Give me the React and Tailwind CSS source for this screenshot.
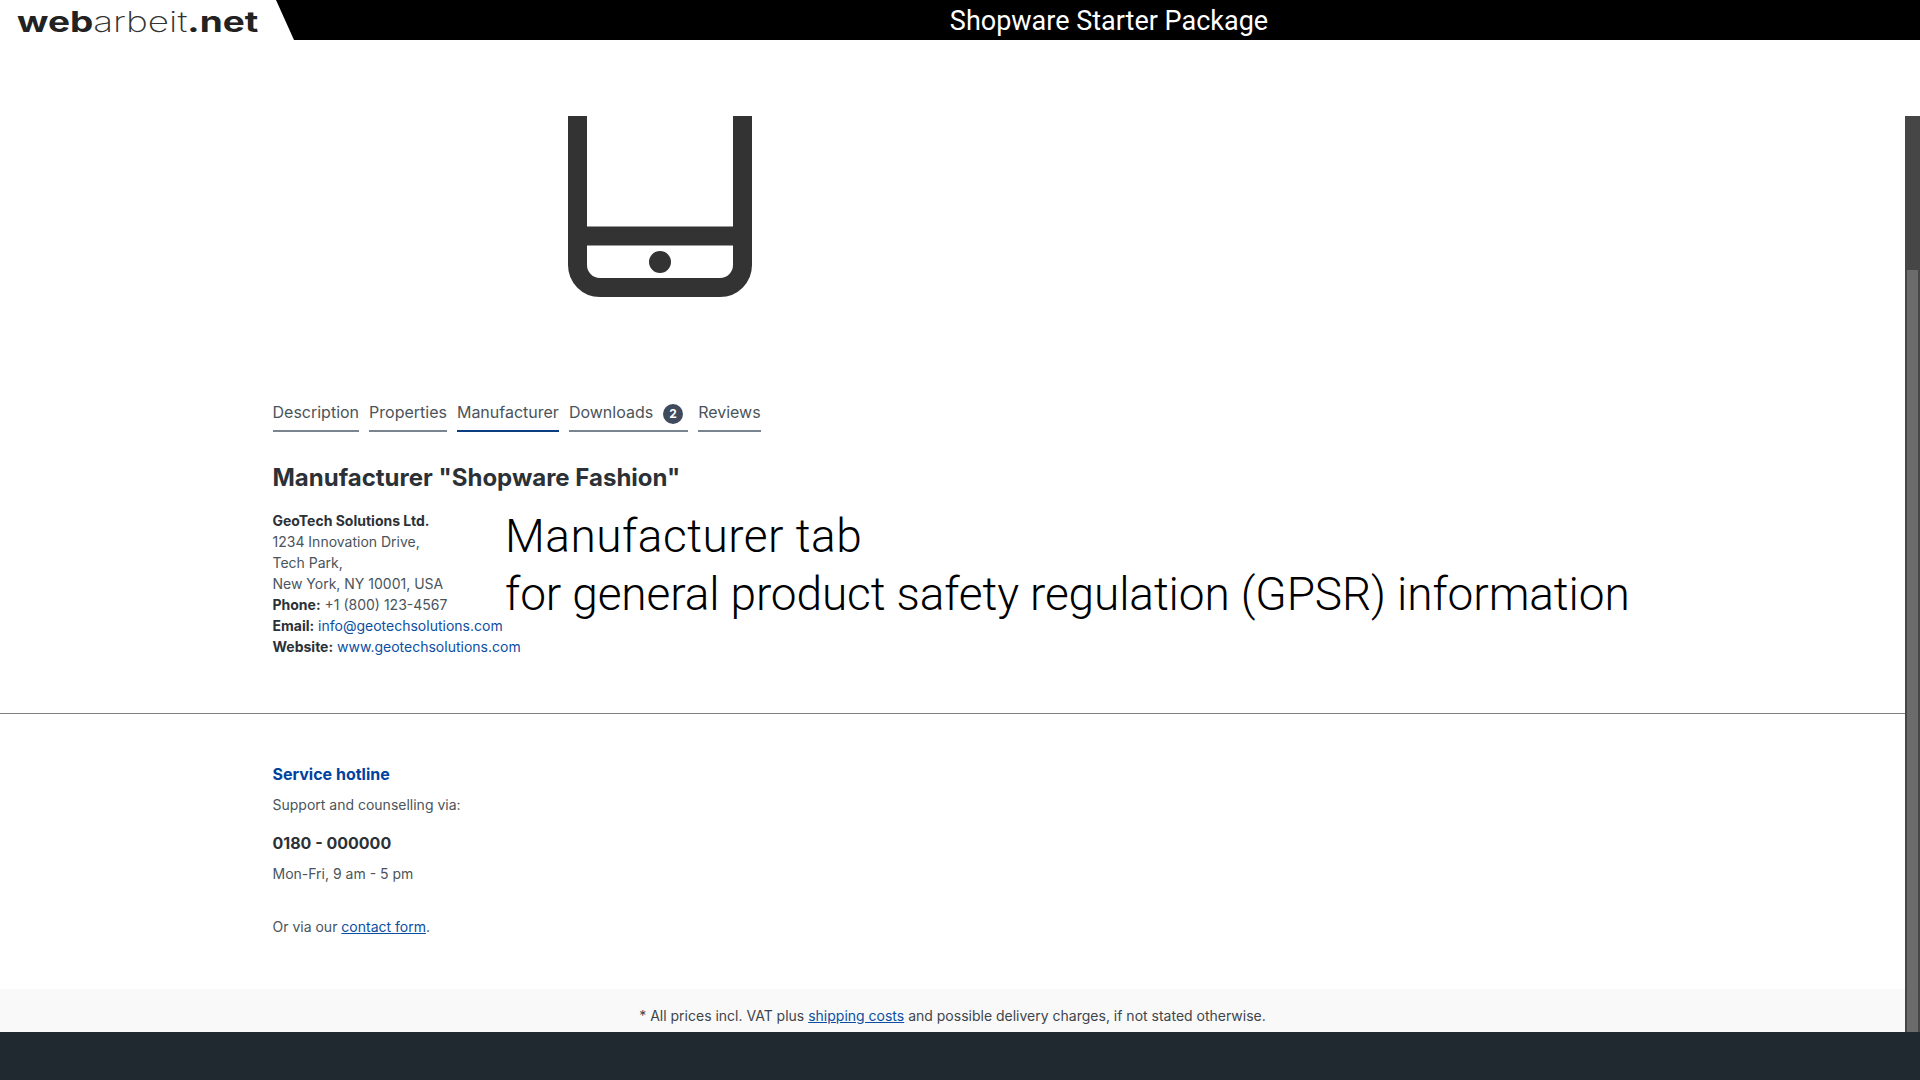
const tabs = [
  { label: 'Description' },
  { label: 'Properties' },
  { label: 'Manufacturer', active: true },
  { label: 'Downloads', badge: 2 },
  { label: 'Reviews' },
]

function PhoneIcon() {
  // bottom part of the phone glyph, the top is cut off by the image frame
  return (
    <svg width="184" height="182" viewBox="0 0 184 182" fill="none" className="block">
      <path d="M9.5 0V149A22.5 22.5 0 0 0 32 171.5H152A22.5 22.5 0 0 0 174.5 149V0" stroke="#333" strokeWidth="19" />
      <path d="M9.5 120H174.5" stroke="#333" strokeWidth="19" />
      <circle cx="92" cy="146" r="11" fill="#333" />
    </svg>
  )
}

export default function App() {
  return (
    <div className="relative h-[1080px] w-[1920px] overflow-hidden bg-white font-['Inter',sans-serif] text-[14px] leading-[21px] text-[#4a545b]">
      {/* Top bar */}
      <header className="relative flex h-10 items-center bg-black">
        <div className="flex h-10 w-[294px] shrink-0 items-center bg-white pl-[17px] pt-[3px] [clip-path:polygon(0_0,276px_0,294px_100%,0_100%)]">
          <span className="origin-left scale-x-[1.32] whitespace-nowrap text-[28px] leading-none text-[#222]">
            <span className="font-bold">web</span>
            <span className="font-extralight text-[#333]">arbeit</span>
            <span className="font-bold">.net</span>
          </span>
        </div>
        <div className="flex-1 pl-[4px] pt-[2px] text-center font-['Roboto',sans-serif] text-[27px] leading-10 text-white">
          Shopware Starter Package
        </div>
      </header>

      <div className="flex h-[992px]">
        <main className="flex w-[1905px] flex-col">
          <div className="pl-[272.5px] pt-[76px]">
            <div className="ml-[295.5px]">
              <PhoneIcon />
            </div>

            <nav className="mt-[102px] flex gap-[10px] text-[16px] leading-6">
              {tabs.map((tab) => (
                <div
                  key={tab.label}
                  className={`flex h-[32px] items-start border-b-2 ${tab.active ? 'border-[#0b3e7f]' : 'border-[#798490]'}`}
                >
                  <span>{tab.label}</span>
                  {tab.badge && (
                    <span className="ml-[10px] mr-[5px] mt-[4px] flex h-5 w-5 items-center justify-center rounded-full bg-[#3f4a5c] text-[12px] font-bold leading-none text-white">
                      {tab.badge}
                    </span>
                  )}
                </div>
              ))}
            </nav>

            <h2 className="mt-[31px] text-[24px] font-bold leading-[30px] text-[#2b3136]">
              Manufacturer "Shopware Fashion"
            </h2>

            <div className="mt-[17px]">
              <p className="font-bold text-[#2b3136]">GeoTech Solutions Ltd.</p>
              <p>1234 Innovation Drive,</p>
              <p>Tech Park,</p>
              <p>New York, NY 10001, USA</p>
              <p><b className="font-bold text-[#2b3136]">Phone:</b> +1 (800) 123-4567</p>
              <p><b className="font-bold text-[#2b3136]">Email:</b> <a className="text-[#0b4ea2]">info@geotechsolutions.com</a></p>
              <p><b className="font-bold text-[#2b3136]">Website:</b> <a className="text-[#0b4ea2]">www.geotechsolutions.com</a></p>
            </div>
          </div>

          <hr className="mt-[56px] border-t border-[#808080]" />

          <div className="pl-[272.5px] pt-[48px]">
            <h3 className="text-[16px] font-bold leading-6 text-[#0042a0]">Service hotline</h3>
            <p className="mt-[8px]">Support and counselling via:</p>
            <p className="mt-[16px] text-[16px] font-bold leading-6 text-[#2b3136]">0180 - 000000</p>
            <p className="mt-[8px]">Mon-Fri, 9 am - 5 pm</p>
            <p className="mt-[32px]">Or via our <a className="text-[#0b4ea2] underline">contact form</a>.</p>
          </div>

          <div className="mt-auto flex h-[43px] items-center justify-center bg-[#f9f9f9] pt-[10px] text-[#3d454b]">
            <p>* All prices incl. VAT plus <a className="text-[#0b4ea2] underline">shipping costs</a> and possible delivery charges, if not stated otherwise.</p>
          </div>
        </main>

        {/* Scrollbar */}
        <div className="w-[15px] pt-[76px]">
          <div className="flex h-full flex-col bg-[#464646] px-[2px] pt-[154px]">
            <div className="flex-1 bg-[#6b6b6b]" />
          </div>
        </div>
      </div>

      <div className="h-[48px] bg-[#212930]" />

      {/* Annotation over the page */}
      <div className="absolute left-[505px] top-[507px] whitespace-nowrap font-['Roboto',sans-serif] text-[46px] font-light leading-[58px] text-black">
        <p className="tracking-[0.5px]">Manufacturer tab</p>
        <p className="tracking-[-0.12px]">for general product safety regulation (GPSR) information</p>
      </div>
    </div>
  )
}
